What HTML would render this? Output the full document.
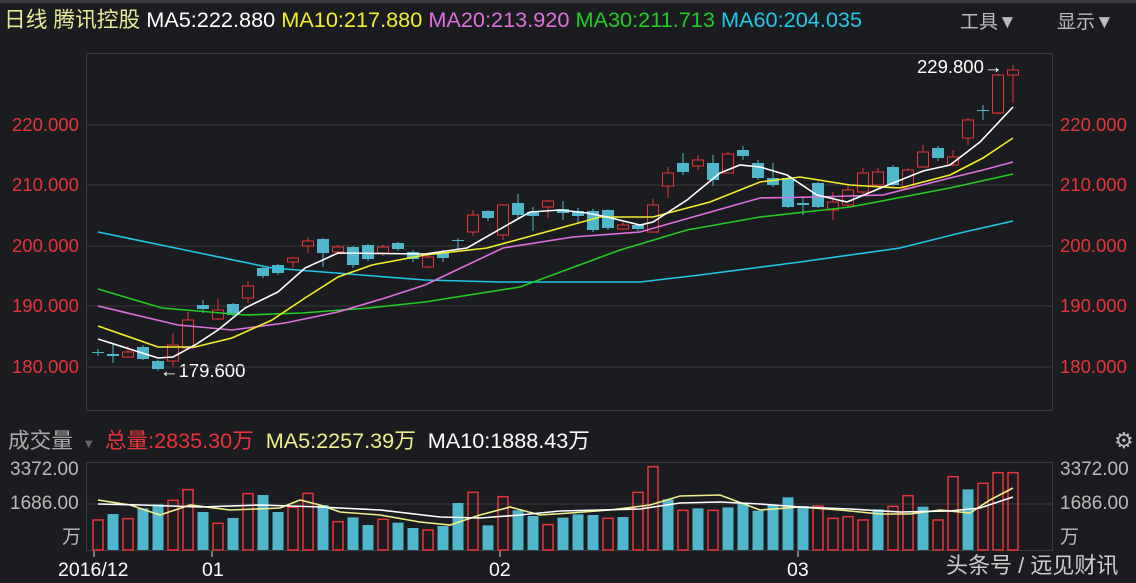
<!DOCTYPE html>
<html><head><meta charset="utf-8"><style>
html,body{margin:0;padding:0;background:#1b1c20;width:1136px;height:583px;overflow:hidden}
body{position:relative;font-family:"Liberation Sans","Noto Sans CJK SC",sans-serif}
.t{position:absolute;white-space:nowrap}
.y{font-size:18.5px;color:#e8343a;line-height:22px}
.v{font-size:19px;color:#bbb;line-height:22px}
.d{font-size:19.5px;color:#fff;line-height:22px}
</style></head><body>
<div style="position:absolute;left:0;top:0;width:1136px;height:3px;background:#3a3b40"></div>
<div class="t" style="left:4px;top:6px;font-size:21.7px;line-height:28px">
<span style="color:#e8e89a">日线 腾讯控股</span> <span style="color:#fff">MA5:222.880</span> <span style="color:#f2ef2a">MA10:217.880</span> <span style="color:#e070e0">MA20:213.920</span> <span style="color:#22cc22">MA30:211.713</span> <span style="color:#20c8e8">MA60:204.035</span></div>
<div class="t" style="left:960px;top:7px;font-size:19px;color:#bbb">工具▼</div>
<div class="t" style="left:1057px;top:7px;font-size:19px;color:#bbb">显示▼</div>
<div class="t y" style="left:12px;top:114px">220.000</div>
<div class="t y" style="left:12px;top:174px">210.000</div>
<div class="t y" style="left:12px;top:235px">200.000</div>
<div class="t y" style="left:12px;top:295px">190.000</div>
<div class="t y" style="left:12px;top:356px">180.000</div>
<div class="t y" style="left:1060px;top:114px">220.000</div>
<div class="t y" style="left:1060px;top:174px">210.000</div>
<div class="t y" style="left:1060px;top:235px">200.000</div>
<div class="t y" style="left:1060px;top:295px">190.000</div>
<div class="t y" style="left:1060px;top:356px">180.000</div>
<div class="t" style="left:160px;top:360px;font-size:18.5px;color:#fff;line-height:22px">←179.600</div>
<div class="t" style="left:917px;top:56px;font-size:18.5px;color:#fff;line-height:22px">229.800→</div>
<div class="t" style="left:8px;top:428px;font-size:21.6px;line-height:26px"><span style="color:#aaa">成交量</span> <span style="color:#666;font-size:13px">&nbsp;▼&nbsp;</span> <span style="color:#e8343a">总量:2835.30万</span>&nbsp; <span style="color:#f0ee8a">MA5:2257.39万</span>&nbsp; <span style="color:#fff">MA10:1888.43万</span></div>
<div class="t" style="left:1114px;top:428px;font-size:22px;color:#bbb">⚙</div>
<div class="t v" style="left:10px;top:459px">3372.00</div>
<div class="t v" style="left:10px;top:493px">1686.00</div>
<div class="t v" style="left:62px;top:527px">万</div>
<div class="t v" style="left:1060px;top:459px">3372.00</div>
<div class="t v" style="left:1060px;top:493px">1686.00</div>
<div class="t v" style="left:1060px;top:527px">万</div>
<div class="t d" style="left:58px;top:559px">2016/12</div>
<div class="t d" style="left:202px;top:559px">01</div>
<div class="t d" style="left:489px;top:559px">02</div>
<div class="t d" style="left:787px;top:559px">03</div>
<div class="t" style="left:946px;top:548px;font-size:22px;color:#ccc">头条号 / 远见财讯</div>
<svg id="s" width="1136" height="583" style="position:absolute;left:0;top:0" xmlns="http://www.w3.org/2000/svg">
<rect x="86.5" y="53.5" width="966" height="357" fill="none" stroke="#3a3b40"/>
<g stroke="#38393e"><line x1="87" x2="1052" y1="125" y2="125"/><line x1="87" x2="1052" y1="185" y2="185"/><line x1="87" x2="1052" y1="246" y2="246"/><line x1="87" x2="1052" y1="306" y2="306"/><line x1="87" x2="1052" y1="367" y2="367"/>
<line x1="87" x2="1052" y1="504" y2="504"/></g>
<rect x="86.5" y="462.5" width="966" height="88" fill="none" stroke="#3a3b40"/>
<g stroke="#ddd"><line x1="94" x2="94" y1="551" y2="557"/><line x1="212" x2="212" y1="551" y2="557"/><line x1="500" x2="500" y1="551" y2="557"/><line x1="798" x2="798" y1="551" y2="557"/></g>
<g id="g"></g>
</svg>
<script>
var R="#e8343a",B="#4fb6cc",g=document.getElementById("g"),h="";
var c=[[352,353,349,356,0],[354,356,344,363,0],[352,357,346,358,1],[347,359,345,360,0],[361,369,360,371,0],[345,361,333,366,1],[320,348,312,350,1],[305,309,300,313,0],[310,319,299,320,1],[304,315,303,316,0],[286,298,281,303,1],[268,276,266,278,0],[265,273,264,275,0],[258,262,257,268,1],[241,246,237,253,1],[239,253,238,267,0],[247,252,245,254,1],[247,265,246,268,0],[245,259,244,261,0],[247,253,245,256,1],[243,249,242,251,0],[252,259,250,262,0],[257,267,254,268,1],[253,258,250,262,0],[240,241,238,250,0],[215,232,210,236,1],[211,218,210,221,0],[205,235,204,240,1],[203,215,194,218,0],[212,216,207,231,0],[201,207,200,218,1],[209,213,201,220,0],[211,216,208,222,0],[211,230,209,232,0],[210,228,209,230,0],[225,229,222,230,1],[225,229,224,231,0],[205,232,199,233,1],[173,186,167,198,1],[163,172,153,175,0],[160,166,155,170,1],[163,180,155,186,0],[154,173,152,174,1],[150,156,146,160,0],[163,178,160,180,0],[178,185,163,187,0],[178,207,177,208,0],[203,205,197,215,0],[183,207,182,208,0],[202,210,192,220,1],[190,205,185,207,1],[173,192,168,194,1],[172,185,168,187,1],[167,185,165,186,0],[170,188,168,190,1],[152,167,145,168,1],[148,158,146,161,0],[157,165,150,166,1],[120,138,118,145,1],[110,111,105,120,0],[75,113,74,114,1],[70,75,65,103,1]];
for(var i=0;i<c.length;i++){var x=98+15*i,d=c[i],col=d[4]?R:B;
h+='<line x1="'+x+'" x2="'+x+'" y1="'+d[2]+'" y2="'+d[3]+'" stroke="'+col+'"/>';
var hh=Math.max(1,d[1]-d[0]);
if(d[4])h+='<rect x="'+(x-5.5)+'" y="'+d[0]+'" width="11" height="'+hh+'" fill="#1b1c20" stroke="'+R+'"/>';
else h+='<rect x="'+(x-6)+'" y="'+d[0]+'" width="12" height="'+hh+'" fill="'+B+'"/>';}
var v=[[300,1],[282,0],[296,1],[265,0],[253,0],[241,1],[209,1],[276,0],[310,1],[294,0],[221,1],[225,0],[276,0],[262,1],[220,1],[255,0],[305,1],[292,0],[315,0],[298,1],[308,0],[324,0],[330,1],[318,0],[249,0],[217,1],[316,0],[230,1],[271,0],[288,0],[314,1],[293,0],[283,0],[285,0],[295,1],[291,0],[217,1],[140,1],[238,0],[271,1],[265,0],[271,1],[262,0],[248,0],[272,0],[255,0],[232,0],[258,0],[258,1],[295,1],[290,1],[300,1],[268,0],[259,1],[227,1],[260,0],[300,1],[170,1],[208,0],[190,1],[158,1],[158,1]];
for(var i=0;i<62;i++){var x=98+15*i,t=420+v[i][0]/3,hh=550-t;
if(v[i][1])h+='<rect x="'+(x-5)+'" y="'+t+'" width="10" height="'+hh+'" fill="none" stroke="'+R+'" stroke-width="1.5"/>';
else h+='<rect x="'+(x-5.5)+'" y="'+t+'" width="11" height="'+hh+'" fill="'+B+'"/>';}
function pl(p,col){h+='<polyline fill="none" stroke="'+col+'" stroke-width="1.6" points="'+p+'"/>';}
pl("98,232 185,250 272,268 425,280 500,282 640,282 700,275 800,262 900,248 960,233 1013,221","#20c8e8");
pl("98,289 162,308 245,315 302,313 368,308 425,302 520,287 620,250 687,230 760,217 850,207 950,188 1013,174","#22cc22");
pl("98,306 178,325 232,330 285,323 338,312 385,298 425,285 503,248 573,237 640,232 707,213 760,198 817,197 883,195 950,178 983,170 1013,162","#e070e0");
pl("98,326 158,347 195,347 232,338 272,320 305,298 338,277 372,265 425,255 487,248 553,230 600,217 653,217 710,202 760,182 800,177 850,185 900,188 950,175 983,158 1013,138","#f2ef2a");
pl("98,339 158,358 173,357 195,345 218,330 245,308 278,292 305,268 338,253 425,254 467,248 530,212 560,210 587,213 607,217 640,225 653,222 687,200 720,173 740,165 760,167 787,175 817,195 847,202 883,187 923,171 950,165 980,142 1013,107","#fff");
pl("98,500 130,505 160,515 190,505 230,510 280,508 300,500 320,505 340,512 380,515 420,522 450,525 480,515 510,507 540,515 570,513 610,510 650,505 680,496 720,495 760,510 800,507 840,510 880,514 910,514 940,510 970,513 990,500 1013,488","#f0ee8a");
pl("98,504 140,505 200,507 260,505 320,507 380,510 440,517 480,518 520,515 560,511 600,510 640,509 680,503 720,502 760,504 800,507 850,509 900,512 950,511 980,508 1013,497","#fff");
g.innerHTML=h;
</script>
</body></html>
